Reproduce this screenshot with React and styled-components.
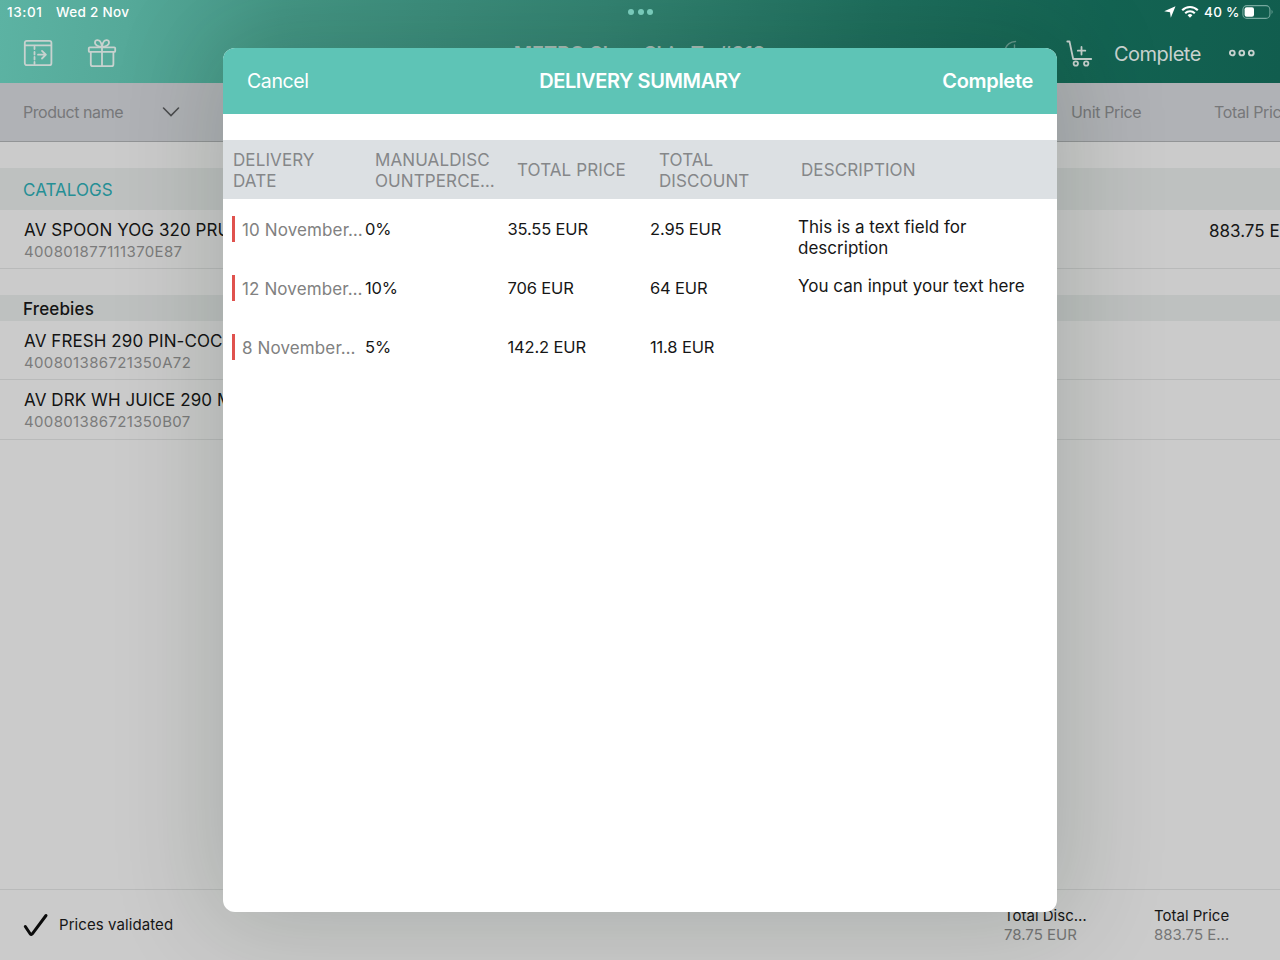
import React from "react";
import styled, { createGlobalStyle } from "styled-components";

const GlobalStyle = createGlobalStyle`
  * { box-sizing: border-box; }
  html, body { margin: 0; padding: 0; }
  body {
    width: 1280px;
    height: 960px;
    overflow: hidden;
    font-family: Inter, "Liberation Sans", sans-serif;
    font-size: 17px;
    color: #161616;
  }
`;

const Screen = styled.div`
  position: relative;
  display: flex;
  flex-direction: column;
  width: 1280px;
  height: 960px;
  overflow: hidden;
  background: #cbcbcb;
`;

const TopBar = styled.header`
  height: 83px;
  flex: none;
  background: linear-gradient(97deg, #5cb3a3 0%, #55a999 10%, #459786 22%, #348473 47%, #1f6f5e 68%, #136352 86%, #115d4e 100%);
`;

const StatusBar = styled.div`
  display: flex;
  align-items: center;
  height: 24px;
  padding: 0 6px 0 7px;
  color: #fff;
  font-size: 13.5px;
  font-weight: 500;
  white-space: nowrap;
`;

const StatusTime = styled.span`
  width: 49px;
  letter-spacing: 0.6px;
`;

const StatusDate = styled.span`
  width: 572px;
  letter-spacing: 0.3px;
`;

const StatusDots = styled.div`
  display: flex;
  gap: 3.5px;
  flex: 1;
  i {
    width: 6px;
    height: 6px;
    border-radius: 50%;
    background: #7fd3c3;
  }
`;

const StatusIcons = styled.div`
  display: flex;
  align-items: center;
  svg { display: block; flex: none; }
`;

const WifiIcon = styled.svg`
  margin-left: 5px;
  fill: none;
  stroke: #fff;
  stroke-width: 2.1;
`;

const BatteryLabel = styled.span`
  width: 38px;
  margin-left: 5px;
  letter-spacing: 0.3px;
`;

const NavBar = styled.div`
  display: flex;
  align-items: center;
  height: 59px;
  padding: 0 24px 0 23px;
  color: #c8d2cf;
`;

const NavIcon = styled.svg`
  display: block;
  flex: none;
  margin-left: ${(p) => p.$left || 0}px;
  margin-top: ${(p) => p.$top || 0}px;
  fill: none;
  stroke: currentColor;
  stroke-width: ${(p) => p.$stroke || 1.8};
  stroke-linecap: round;
  stroke-linejoin: round;
`;

const NavTitle = styled.h1`
  flex: 1;
  margin: 0;
  padding-left: 162px;
  text-align: center;
  font-size: 20px;
  line-height: 24px;
  font-weight: 600;
  letter-spacing: -0.2px;
  white-space: nowrap;
  color: #a9bcb6;
`;

const NavAction = styled.span`
  width: 87px;
  margin: 0 27px 0 21px;
  font-size: 20px;
  letter-spacing: -0.5px;
`;

const ColumnBar = styled.div`
  display: flex;
  align-items: center;
  flex: none;
  height: 59px;
  padding-left: 23px;
  background: #b0b2b6;
  border-bottom: 1px solid #929496;
  color: #77787a;
  font-size: 16px;
  white-space: nowrap;
  svg { flex: none; }
`;

const ColumnName = styled.span`
  width: ${(p) => p.$width}px;
  flex: none;
  letter-spacing: ${(p) => p.$spacing || 0}px;
`;

const SectionBar = styled.div`
  display: flex;
  align-items: center;
  flex: none;
  height: ${(p) => p.$height}px;
  margin-top: 26px;
  padding: 1px 0 0 23px;
  background: #bec1c0;
  color: ${(p) => p.$color};
  font-size: 17px;
  font-weight: ${(p) => p.$weight || 400};
  letter-spacing: ${(p) => p.$spacing || 0}px;
`;

const ProductRow = styled.div`
  display: flex;
  flex: none;
  height: ${(p) => p.$height}px;
  padding: 9px 0 0 24px;
  border-bottom: 1px solid #b9baba;
  white-space: nowrap;
`;

const ProductInfo = styled.div`
  width: 1185px;
  flex: none;
`;

const ProductName = styled.div`
  font-size: 17px;
  line-height: 23px;
  letter-spacing: 0.08px;
  color: #141414;
`;

const ProductCode = styled.div`
  font-size: 15px;
  line-height: 19px;
  letter-spacing: 0.35px;
  color: #7b7b7b;
`;

const ProductTotal = styled.div`
  font-size: 17px;
  line-height: 24px;
`;

const Footer = styled.footer`
  display: flex;
  align-items: flex-start;
  height: 71px;
  margin-top: auto;
  padding-left: 22px;
  border-top: 1px solid #b9baba;
  font-size: 15px;
  white-space: nowrap;
`;

const Validated = styled.div`
  display: flex;
  align-items: center;
  flex: none;
  gap: 10px;
  width: 982px;
  height: 70px;
  letter-spacing: 0.08px;
  span { padding-bottom: 1px; }
`;

const FooterTotal = styled.div`
  width: 150px;
  flex: none;
  padding-top: 16px;
  line-height: 19px;
  span { display: block; }
  span + span { color: #757575; }
`;

const Sheet = styled.section`
  position: absolute;
  left: 223px;
  top: 48px;
  width: 834px;
  height: 864px;
  display: flex;
  flex-direction: column;
  border-radius: 12px;
  overflow: hidden;
  background: #fff;
  box-shadow: 0 0 100px 14px rgba(0, 28, 12, 0.16);
`;

const SheetHeader = styled.div`
  display: grid;
  grid-template-columns: 1fr auto 1fr;
  align-items: center;
  flex: none;
  height: 66px;
  padding: 0 24px;
  background: #5ec4b6;
  color: #fff;
  font-size: 20px;
`;

const SheetTitle = styled.h2`
  margin: 0;
  font-size: 20px;
  font-weight: 600;
  letter-spacing: -0.38px;
`;

const SheetButton = styled.span`
  text-align: ${(p) => p.$align || "left"};
  font-size: ${(p) => p.$size || 20}px;
  font-weight: ${(p) => p.$weight || 400};
  letter-spacing: ${(p) => p.$spacing || 0}px;
`;

const TableHead = styled.div`
  display: grid;
  grid-template-columns: 142px 142px 142px 142px 1fr;
  align-items: center;
  flex: none;
  height: 59px;
  margin-top: 26px;
  padding: 2px 0 0 10px;
  background: #dce0e3;
  color: #858789;
  font-size: 17px;
  line-height: 21px;
`;

const HeadCell = styled.div`
  letter-spacing: 0.1px;
  white-space: nowrap;
`;

const TableRow = styled.div`
  display: grid;
  grid-template-columns: 133px 142.5px 142.5px 148px 1fr;
  flex: none;
  height: 59.3px;
  padding-left: 9px;
  font-size: 16.5px;
  line-height: 21px;
`;

const DateCell = styled.div`
  align-self: center;
  height: 26px;
  border-left: 3px solid #e0524e;
  padding-left: 7px;
  line-height: 28px;
  color: #818181;
  font-size: 17px;
  white-space: nowrap;
  letter-spacing: 0.12px;
`;

const ValueCell = styled.div`
  align-self: center;
  padding-top: 1px;
  letter-spacing: -0.15px;
  white-space: nowrap;
`;

const NoteCell = styled.div`
  padding-top: 18px;
  font-size: 17px;
  letter-spacing: 0.02px;
  white-space: pre-line;
`;

const deliveries = [
  { date: "10 November…", manual: "0%", price: "35.55 EUR", discount: "2.95 EUR", note: "This is a text field for\ndescription" },
  { date: "12 November…", manual: "10%", price: "706 EUR", discount: "64 EUR", note: "You can input your text here" },
  { date: "8 November…", manual: "5%", price: "142.2 EUR", discount: "11.8 EUR", note: "" },
];

const PanelIcon = () => (
  <NavIcon width="30" height="28" viewBox="0 0 30 28" $top={-1}>
    <rect x="1.8" y="1.8" width="26.6" height="24.4" rx="2" />
    <path d="M2 6.3h26M11.5 8v2M11.5 13v2.5M11.5 18v2.5M11.5 23v2M15 15.7h7.5M19 11.9l3.9 3.8-3.9 3.8" />
  </NavIcon>
);

const GiftIcon = () => (
  <NavIcon width="30" height="30" viewBox="0 0 30 30" $left={34} $top={-2}>
    <rect x="1.8" y="9.3" width="26.4" height="4.6" rx="1" />
    <path d="M3.8 14v12.2a2 2 0 0 0 2 2h18.600a2 2 0 0 0 2-2V14M15 9.300v18.800M15 9C12 9 7.600 7.200 8 4.200c.5-3 4.600-2.500 5.800.3.600 1.400 1 3 1.200 4.500C15.200 7.500 15.600 5.900 16.200 4.500c1.200-2.800 5.300-3.300 5.800-.3C22.400 7.200 18 9 15 9z" />
  </NavIcon>
);

const LoadingIcon = () => (
  <NavIcon width="30" height="30" viewBox="0 0 30 30" opacity="0.45" $stroke={1.4}>
    <path d="M5 10A12 12 0 0 1 15.500 2.500M14.500 6v3" />
  </NavIcon>
);

const CartIcon = () => (
  <NavIcon width="27" height="28" viewBox="0 0 27 28" $left={36}>
    <path d="M1.300 1.500h2.200l3.700 17.500h18M15.500 7v7.500M11.800 10.700h7.500" />
    <circle cx="9.800" cy="23.500" r="2.200" />
    <circle cx="20.200" cy="23.500" r="2.200" />
  </NavIcon>
);

const MoreIcon = () => (
  <NavIcon width="28" height="10" viewBox="0 0 28 10" $stroke={1.9} $top={-1}>
    <circle cx="4.300" cy="5" r="2.400" />
    <circle cx="13.800" cy="5" r="2.400" />
    <circle cx="23.300" cy="5" r="2.400" />
  </NavIcon>
);

export default function App() {
  return (
    <Screen>
      <GlobalStyle />
      <TopBar>
        <StatusBar>
          <StatusTime>13:01</StatusTime>
          <StatusDate>Wed 2 Nov</StatusDate>
          <StatusDots><i /><i /><i /></StatusDots>
          <StatusIcons>
            <svg width="12" height="12" viewBox="0 0 12 12"><path d="M11.500.3L6.800 11.700 6 6.200.2 5.300z" fill="#fff" /></svg>
            <WifiIcon width="18" height="14" viewBox="0 0 18 14">
              <path d="M1.200 5.200a11 11 0 0 1 15.600 0M4.200 8.300a6.800 6.800 0 0 1 9.600 0" />
              <path d="M9 12.800L6.600 10.300a3.400 3.400 0 0 1 4.800 0z" fill="#fff" stroke="none" />
            </WifiIcon>
            <BatteryLabel>40 %</BatteryLabel>
            <svg width="32" height="14" viewBox="0 0 32 14">
              <rect x=".9" y=".6" width="27" height="12.800" rx="4" fill="none" stroke="#76a89e" strokeWidth="1.100" />
              <rect x="2.600" y="2.300" width="9.400" height="9.400" rx="2" fill="#fff" />
              <path d="M29.600 4.800q1.900 2.200 0 4.400z" fill="#76a89e" />
            </svg>
          </StatusIcons>
        </StatusBar>
        <NavBar>
          <PanelIcon />
          <GiftIcon />
          <NavTitle>METRO Shop Ship To #918</NavTitle>
          <LoadingIcon />
          <CartIcon />
          <NavAction>Complete</NavAction>
          <MoreIcon />
        </NavBar>
      </TopBar>

      <ColumnBar>
        <ColumnName $width={139} $spacing={-0.45}>Product name</ColumnName>
        <svg width="18" height="12" viewBox="0 0 18 12" fill="none" stroke="#4c4d4f" strokeWidth="1.600" strokeLinecap="round">
          <path d="M1.500 2L9 9.500 16.500 2" />
        </svg>
        <ColumnName $width={891} />
        <ColumnName $width={143} $spacing={-0.35}>Unit Price</ColumnName>
        <ColumnName $width={90} $spacing={-0.35}>Total Price</ColumnName>
      </ColumnBar>

      <SectionBar $height={42} $color="#258f95" $spacing={0.05}>CATALOGS</SectionBar>
      <ProductRow $height={59}>
        <ProductInfo>
          <ProductName>AV SPOON YOG 320 PRUNE</ProductName>
          <ProductCode>400801877111370E87</ProductCode>
        </ProductInfo>
        <ProductTotal>883.75 EUR</ProductTotal>
      </ProductRow>
      <SectionBar $height={26} $color="#141414" $weight={500} $spacing={0.15}>Freebies</SectionBar>
      <ProductRow $height={59}>
        <ProductInfo>
          <ProductName>AV FRESH 290 PIN-COCO</ProductName>
          <ProductCode>400801386721350A72</ProductCode>
        </ProductInfo>
      </ProductRow>
      <ProductRow $height={60}>
        <ProductInfo>
          <ProductName>AV DRK WH JUICE 290 MULTI</ProductName>
          <ProductCode>400801386721350B07</ProductCode>
        </ProductInfo>
      </ProductRow>

      <Footer>
        <Validated>
          <svg width="27" height="26" viewBox="0 0 27 26" fill="none" stroke="#0b0b0b" strokeWidth="3" strokeLinecap="round" strokeLinejoin="round">
            <path d="M3.300 14.500l5 7.500q1 1 2-.2L24 3.500" />
          </svg>
          <span>Prices validated</span>
        </Validated>
        <FooterTotal><span>Total Disc…</span><span>78.75 EUR</span></FooterTotal>
        <FooterTotal><span>Total Price</span><span>883.75 E…</span></FooterTotal>
      </Footer>

      <Sheet>
        <SheetHeader>
          <SheetButton $size={19.5} $spacing={-0.4}>Cancel</SheetButton>
          <SheetTitle>DELIVERY SUMMARY</SheetTitle>
          <SheetButton $align="right" $weight={600} $spacing={-0.3}>Complete</SheetButton>
        </SheetHeader>
        <TableHead>
          <HeadCell>DELIVERY<br />DATE</HeadCell>
          <HeadCell>MANUALDISC<br />OUNTPERCE…</HeadCell>
          <HeadCell>TOTAL PRICE</HeadCell>
          <HeadCell>TOTAL<br />DISCOUNT</HeadCell>
          <HeadCell>DESCRIPTION</HeadCell>
        </TableHead>
        {deliveries.map((d) => (
          <TableRow key={d.date}>
            <DateCell>{d.date}</DateCell>
            <ValueCell>{d.manual}</ValueCell>
            <ValueCell>{d.price}</ValueCell>
            <ValueCell>{d.discount}</ValueCell>
            <NoteCell>{d.note}</NoteCell>
          </TableRow>
        ))}
      </Sheet>
    </Screen>
  );
}
